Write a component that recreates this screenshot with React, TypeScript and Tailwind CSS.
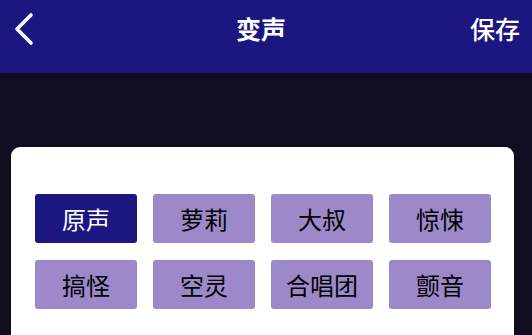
import React, { useState } from 'react';

const voices = ['原声', '萝莉', '大叔', '惊悚', '搞怪', '空灵', '合唱团', '颤音'];

const font = { fontFamily: "'Noto Sans CJK SC', 'Noto Sans', sans-serif" };

export default function App() {
  const [active, setActive] = useState(0);

  return (
    <div className="w-[532px] h-[335px] overflow-hidden bg-[#0f0d1f] flex flex-col" style={font}>
      {/* header */}
      <div className="h-[73px] shrink-0 bg-[#1b1680] flex items-center justify-between px-[12px] pb-[16px]">
        <button className="w-[40px] h-[40px] flex items-center">
          <svg width="26" height="34" viewBox="0 0 26 34" fill="none">
            <path d="M19 3 L5 17 L19 31" stroke="white" strokeWidth="3.6" strokeLinecap="round" strokeLinejoin="round" />
          </svg>
        </button>
        <span className="text-white text-[25px] font-bold leading-none">变声</span>
        <span className="text-white text-[25px] font-medium leading-none w-[50px] text-right">保存</span>
      </div>

      {/* content */}
      <div className="flex-1 pt-[74px] px-[11px] pr-[18px]">
        <div className="bg-white rounded-t-[9px] h-full pt-[47px] pl-[24px] pr-[24px]">
          <div className="grid grid-cols-[repeat(4,102px)] gap-x-[16px] gap-y-[17px]">
            {voices.map((v, i) => (
              <button
                key={v}
                onClick={() => setActive(i)}
                className={`h-[49px] rounded-[3px] flex items-center justify-center text-[24px] leading-none ${
                  active === i ? 'bg-[#1b1680] text-white' : 'bg-[#9d88c9] text-black'
                }`}
              >
                {v}
              </button>
            ))}
          </div>
        </div>
      </div>
    </div>
  );
}
